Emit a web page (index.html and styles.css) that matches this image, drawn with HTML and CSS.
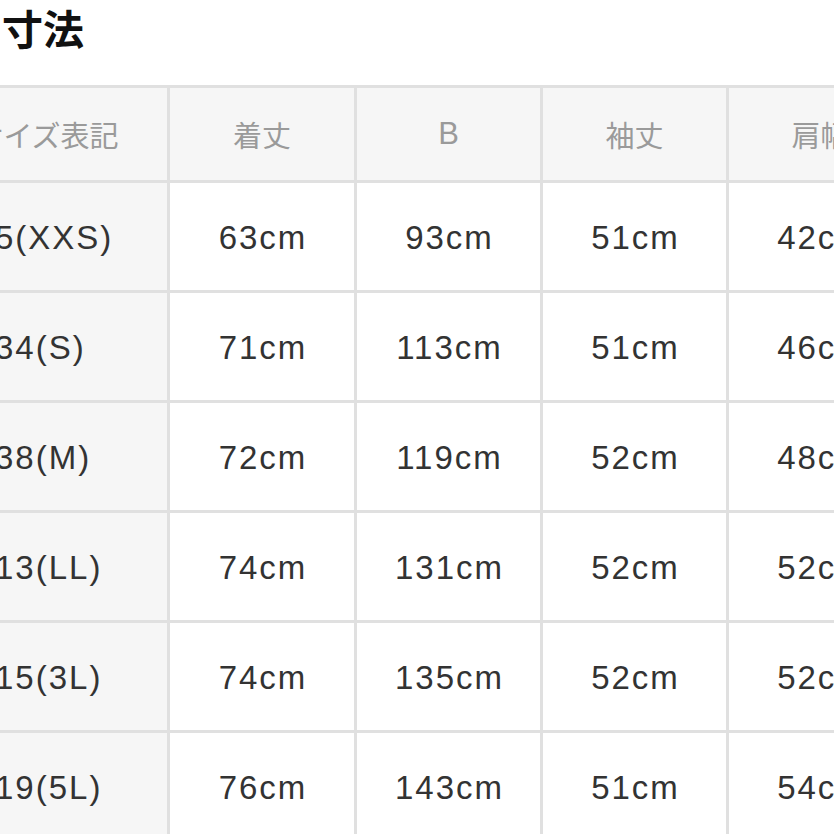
FILE: index.html
```html
<!DOCTYPE html>
<html lang="ja">
<head>
<meta charset="utf-8">
<title>寸法</title>
<link rel="stylesheet" href="styles.css">
</head>
<body>
<div class="page">
  <h2 class="title">寸法</h2>
  <div class="size-table">
    <div class="cell head first">サイズ表記</div>
    <div class="cell head">着丈</div>
    <div class="cell head latin">B</div>
    <div class="cell head">袖丈</div>
    <div class="cell head">肩幅</div>

    <div class="cell first num">5(XXS)</div>
    <div class="cell num">63cm</div>
    <div class="cell num">93cm</div>
    <div class="cell num">51cm</div>
    <div class="cell num">42cm</div>

    <div class="cell first num">34(S)</div>
    <div class="cell num">71cm</div>
    <div class="cell num">113cm</div>
    <div class="cell num">51cm</div>
    <div class="cell num">46cm</div>

    <div class="cell first num">38(M)</div>
    <div class="cell num">72cm</div>
    <div class="cell num">119cm</div>
    <div class="cell num">52cm</div>
    <div class="cell num">48cm</div>

    <div class="cell first num">13(LL)</div>
    <div class="cell num">74cm</div>
    <div class="cell num">131cm</div>
    <div class="cell num">52cm</div>
    <div class="cell num">52cm</div>

    <div class="cell first num">15(3L)</div>
    <div class="cell num">74cm</div>
    <div class="cell num">135cm</div>
    <div class="cell num">52cm</div>
    <div class="cell num">52cm</div>

    <div class="cell first num">19(5L)</div>
    <div class="cell num">76cm</div>
    <div class="cell num">143cm</div>
    <div class="cell num">51cm</div>
    <div class="cell num">54cm</div>
  </div>
</div>
</body>
</html>
```
FILE: styles.css
```css
html, body {
  margin: 0;
  padding: 0;
  background: #ffffff;
  overflow: hidden;
}

.page {
  width: 834px;
  height: 834px;
  overflow: hidden;
}

.title {
  margin: 0;
  padding: 7px 0 0 2px;
  height: 85px;
  box-sizing: border-box;
  font-family: "Noto Sans CJK JP", sans-serif;
  font-weight: 700;
  font-size: 41px;
  line-height: 40px;
  color: #111111;
}

.size-table {
  margin-left: -80px;
  width: 992px;
  display: grid;
  grid-template-columns: 247px 184px 183px 183px 183px;
  grid-template-rows: 92px repeat(6, 107px);
  gap: 3px;
  background: #e0e0e0;
  border-top: 3px solid #e0e0e0;
}

.cell {
  display: flex;
  align-items: center;
  justify-content: center;
  background: #ffffff;
  white-space: nowrap;
}

.head {
  background: #f6f6f6;
  font-family: "Noto Sans CJK JP", sans-serif;
  font-size: 29px;
  color: #9a9a9a;
}

.head.latin {
  font-family: "Liberation Sans", "Noto Sans CJK JP", sans-serif;
  font-size: 31px;
}

.first {
  background: #f6f6f6;
}

.head.first {
  padding-left: 6px;
}

.num {
  font-family: "Liberation Sans", "Noto Sans CJK JP", sans-serif;
  font-size: 33px;
  letter-spacing: 2px;
  padding-left: 2px;
  padding-top: 3px;
  color: #333333;
}

.num.first {
  justify-content: flex-start;
  padding-left: 75px;
}
```
